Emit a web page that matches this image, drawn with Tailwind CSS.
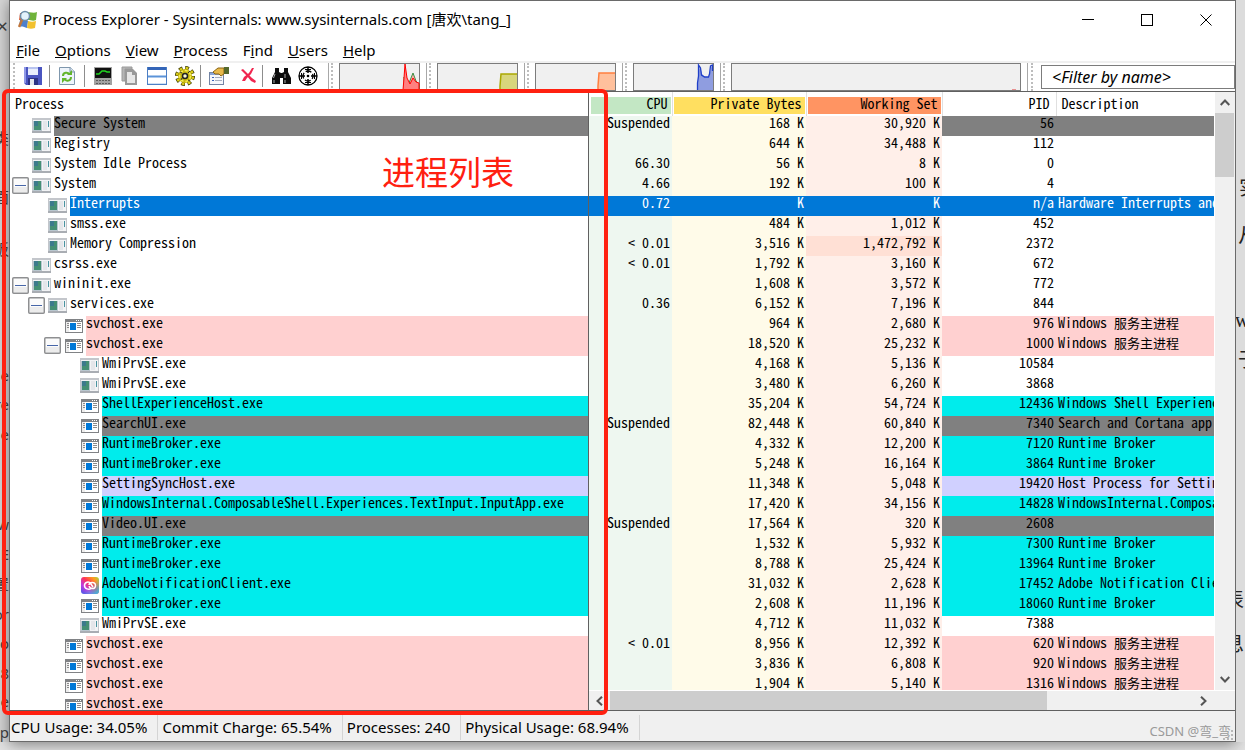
<!DOCTYPE html>
<html lang="en">
<head>
<meta charset="utf-8">
<title>Process Explorer - Sysinternals: www.sysinternals.com</title>
<script src="https://cdn.jsdelivr.net/npm/@tailwindcss/browser@4"></script>
</head>
<body class="relative flex h-screen flex-col overflow-hidden bg-[#e2e2e2] pb-2 font-['Noto_Sans','Noto_Sans_CJK_SC',sans-serif] text-black">

<svg class="absolute size-0" aria-hidden="true">
  <symbol id="console" viewBox="0 0 19 15">
    <rect width="19" height="15" fill="#c3c6cb"/><rect x="1" y="2" width="17" height="11" fill="#f2f3f5"/><rect y="13" width="19" height="2" fill="#a9adb3"/>
    <rect x="1" y="3" width="9" height="10" fill="#b9c6cf"/><rect x="2" y="3" width="7" height="9" fill="#458f74"/>
    <rect x="2" y="3" width="4" height="5" fill="#3c7a8c"/><rect x="11" y="3" width="4" height="9" fill="#e4e6ea"/>
    <rect x="16" y="3" width="1" height="6" fill="#4a93a0"/>
  </symbol>
  <symbol id="app" viewBox="0 0 18 14">
    <rect width="18" height="14" fill="#808285"/><rect x="1" y="3" width="16" height="10" fill="#fff"/>
    <rect x="1" y="3" width="3" height="10" fill="#ededed"/>
    <rect x="5" y="4" width="6" height="7" fill="#0078d7"/>
    <path d="M2 4.500h2M2 6.500h2M2 8.500h2M12 4.500h4M12 6.500h4M12 8.500h4" stroke="#8b8b8b"/>
    <path d="M11 1.500h1M13 1.500h1M15 1.500h1" stroke="#fff"/>
  </symbol>
  <symbol id="adobe" viewBox="0 0 18 18">
    <defs>
      <linearGradient id="ag" x1="0" y1="1" x2="1" y2="0"><stop offset="0" stop-color="#3a5be8"/><stop offset=".3" stop-color="#c03be0"/><stop offset=".55" stop-color="#ff3355"/><stop offset=".8" stop-color="#ff9a1f"/><stop offset="1" stop-color="#9bdc3c"/></linearGradient>
      <linearGradient id="ah" x1="0" y1="0" x2="1" y2="1"><stop offset=".5" stop-color="#28c8e8" stop-opacity="0"/><stop offset="1" stop-color="#28c8e8"/></linearGradient>
    </defs>
    <rect width="18" height="17" rx="3" fill="url(#ag)"/><rect width="18" height="17" rx="3" fill="url(#ah)"/>
    <path d="M10 11.500C8 13 3.500 12 3.500 8.500S8 4 9.500 6.500L12 10M8 8c0-3 6.500-4 6.500.500S9 12 8 9" fill="none" stroke="#fff" stroke-width="1.500"/>
  </symbol>
  <symbol id="minus" viewBox="0 0 17 17">
    <rect x=".75" y=".75" width="15.500" height="15.500" rx="1" fill="#fbfbfb" stroke="#8e8f91" stroke-width="1.500"/>
    <rect x="2" y="10" width="13" height="5" fill="#ececec"/><path d="M3 8.500h11" stroke="#4766a8"/>
  </symbol>
</svg>

<div class="flex min-h-0 flex-1">
  <!-- Document behind the window, left edge -->
  <div aria-hidden="true" class="flex w-[9px] flex-none flex-col items-end overflow-hidden bg-[#d6d6d6] pt-4 text-[15px] leading-[20px] text-[#444]">
    <span class="h-[112px]">✕</span>
    <span class="h-[60px]">类</span>
    <span class="h-[52px]">面</span>
    <span class="h-[126px]">板</span>
    <span class="h-[30px]">he</span>
    <span class="h-[30px]">re</span>
    <span class="h-[90px]">e</span>
    <span class="h-[30px]">w</span>
    <span class="h-[30px]">E</span>
    <span class="h-[30px]">置</span>
    <span class="h-[30px]">or</span>
    <span class="h-[30px]">o</span>
    <span class="h-[28px]">8</span>
    <span class="h-[31px]">e</span>
    <span>op</span>
  </div>

  <main class="flex min-w-0 flex-1 flex-col border border-[#6a6a6a] bg-white shadow-[0_2px_14px_rgba(0,0,0,0.45)]">
    <!-- Title bar -->
    <header class="flex h-[38px] flex-none items-center pl-2">
      <svg class="mr-[5px] size-5 flex-none" viewBox="0 0 20 20">
        <path d="M8 3c4-2 7 1 11-1l-1 8c-4 2-6-1-10 0z" fill="#6fb33a"/><path d="M2 10c4-1 5 0 8 1l-1 7c-3-1-5-2-8-1z" fill="#4d7fcb"/>
        <path d="M10 11c3 1 5 1 8 0l-1 7c-3 1-5 1-8 0z" fill="#f2c12e"/><path d="M2 3h6v7H1z" fill="#d9603b"/>
        <circle cx="7" cy="6" r="4.500" fill="#e4f2fb" stroke="#6d8da8" stroke-width="1.500"/><path d="M4 10L1 17" stroke="#c0763a" stroke-width="2.500"/>
      </svg>
      <h1 class="flex-1 whitespace-nowrap pb-[2px] text-[15px]">Process Explorer - Sysinternals: www.sysinternals.com [唐欢\tang_]</h1>
      <button aria-label="Minimize" class="flex h-full w-[59px] items-center justify-center"><svg class="size-3" viewBox="0 0 12 12"><path d="M0 5.500h12" stroke="#000"/></svg></button>
      <button aria-label="Maximize" class="flex h-full w-[59px] items-center justify-center"><svg class="size-3" viewBox="0 0 12 12"><rect x=".5" y=".5" width="11" height="11" fill="none" stroke="#000"/></svg></button>
      <button aria-label="Close" class="flex h-full w-[59px] items-center justify-center"><svg class="size-3" viewBox="0 0 12 12"><path d="M.5.500l11 11M11.500.500l-11 11" stroke="#000"/></svg></button>
    </header>

    <!-- Menu -->
    <nav class="flex h-[24px] flex-none items-center gap-[15px] border-b-2 border-[#f0f0f0] pl-[6px] text-[15px] leading-[20px]">
      <button><u>F</u>ile</button><button><u>O</u>ptions</button><button><u>V</u>iew</button><button><u>P</u>rocess</button><button>F<u>i</u>nd</button><button><u>U</u>sers</button><button><u>H</u>elp</button>
    </nav>

    <!-- Toolbar -->
    <div class="flex h-[28px] flex-none items-start">
      <div class="flex h-[26px] w-[318px] flex-none items-center">
        <i class="ml-[3px] mr-[8px] h-full border-l-2 border-dotted border-[#bdbdbd]"></i>
        <button aria-label="Save"><svg class="size-5" viewBox="0 0 20 20"><path d="M1 1h18v18H3l-2-2z" fill="#4a55c0"/><path d="M1 1h2v16H1z" fill="#8f98e6"/><rect x="5" y="1" width="10" height="8" fill="#e9eefc"/><rect x="5" y="1" width="10" height="2" fill="#b9c4f0"/><rect x="5" y="12" width="10" height="7" fill="#2d3384"/><rect x="7" y="13" width="4" height="6" fill="#e4e6ee"/></svg></button>
        <i class="ml-[6px] mr-[8px] h-[22px] w-px bg-[#8d8d8d]"></i>
        <button aria-label="Refresh"><svg class="h-5 w-[18px]" viewBox="0 0 18 20"><path d="M1.500 1.500h11l4 4v13h-15z" fill="#eef4fb" stroke="#7f97ad"/><path d="M12 1v5h5" fill="#d4dfec" stroke="#7f97ad"/><path d="M5 10c0-4 5-4 6-2M13 11c0 4-5 5-6 2" stroke="#63b52c" stroke-width="2" fill="none"/><path d="M9 9h5V4zM9 12H4v5z" fill="#63b52c"/></svg></button>
        <i class="ml-[8px] mr-[9px] h-[22px] w-px bg-[#8d8d8d]"></i>
        <button aria-label="System information"><svg class="h-5 w-[18px]" viewBox="0 0 18 20"><rect y="1" width="18" height="18" fill="#a2a2a2"/><rect x="1" y="2" width="16" height="10" fill="#111"/><path d="M2 8h3l3-3h3l2 1h3" stroke="#22d322" stroke-width="1.500" fill="none"/><path d="M2 14.500h14M2 17.500h14" stroke="#5c5c5c" stroke-dasharray="2 1"/></svg></button>
        <button aria-label="Copy" class="ml-[9px]"><svg class="h-5 w-4" viewBox="0 0 16 20"><path d="M1 1h10v2H4v12H1z" fill="#b5b5b5" stroke="#9a9a9a"/><path d="M4 3h8l4 4v12H4z" fill="#999"/><path d="M6 6h5v3h3v8H6z" fill="#e6e6e6"/></svg></button>
        <button aria-label="Split pane" class="ml-[10px]"><svg class="size-5" viewBox="0 0 20 20"><rect x=".5" y="1.500" width="19" height="17" fill="#fff" stroke="#4d7fc4"/><rect x="1" y="1" width="18" height="3" fill="#3465b8"/><path d="M1 10.500h18" stroke="#5b93d8" stroke-width="2"/><path d="M1 17.500h18" stroke="#cfe0f4"/></svg></button>
        <button aria-label="Services" class="ml-[8px]"><svg class="size-5" viewBox="0 0 20 20"><circle cx="10" cy="10" r="8" fill="none" stroke="#3a3800" stroke-width="4" stroke-dasharray="3.600 2.680"/><circle cx="10" cy="10" r="8" fill="none" stroke="#d9cc18" stroke-width="2.500" stroke-dasharray="2.600 3.680" stroke-dashoffset="-.5"/><circle cx="10" cy="10" r="7" fill="#c9b80c"/><circle cx="10" cy="10" r="5.500" fill="none" stroke="#f5ec55" stroke-width="1.500" stroke-dasharray="3 2"/><path d="M5 6l2 1M13 14l2 1M6 14l1-2M13 7l2-2" stroke="#333"/><circle cx="10" cy="10" r="2.500" fill="#f8f6d0" stroke="#222" stroke-width="1.500"/></svg></button>
        <i class="ml-[5px] mr-[8px] h-[22px] w-px bg-[#8d8d8d]"></i>
        <button aria-label="Properties"><svg class="size-5" viewBox="0 0 20 20"><rect x=".5" y="6.500" width="14" height="12" fill="#f5f7fb" stroke="#7384a4"/><rect x="1" y="7" width="13" height="2" fill="#8aa5d8"/><path d="M3 11.500h2M3 14.500h2" stroke="#3a62b8"/><path d="M6 11.500h7M6 14.500h7" stroke="#a5aec0"/><path d="M4 6l5-4h6v6l-3 2-2-2H6z" fill="#e7b84a" stroke="#8a6514"/><rect x="15" y="1" width="5" height="7" fill="#54682c"/></svg></button>
        <button aria-label="Kill process" class="ml-[11px]"><svg class="h-[18px] w-4" viewBox="0 0 16 18"><path d="M1 3l2-1 4 4 5 5 4 3-1 2-4-2-4-5-4-4z" fill="#f0264f"/><path d="M12 1h2l-3 6-4 4-2 3H2l2-4 5-4z" fill="#f0264f"/></svg></button>
        <i class="ml-[6px] mr-[8px] h-[22px] w-px bg-[#8d8d8d]"></i>
        <button aria-label="Find"><svg class="h-5 w-[21px]" viewBox="0 0 21 20"><path d="M4 2h4v4l2 1h1l2-1V2h4v4l3 6v6h-8v-6H9v6H1v-6l3-6z" fill="#0c0c0c"/><path d="M4 8l-1.500 4M14 8v4M3 14v3M14 14v3" stroke="#aaa"/></svg></button>
        <button aria-label="Find window's process" class="ml-[6px]"><svg class="size-5" viewBox="0 0 20 20"><g fill="none" stroke="#000"><circle cx="10" cy="10" r="9" stroke-width="1.300"/><circle cx="10" cy="10" r="5" stroke-width="1.300" stroke-dasharray="6 1.850" stroke-dashoffset="3"/><path d="M10 1v6M10 13v6M1 10h6M13 10h6" stroke-width="1.500"/><path d="M7 3.500h6M7 16.500h6M3.500 7v6M16.500 7v6"/></g><circle cx="10" cy="10" r="1.300"/></svg></button>
      </div>
      <div class="flex h-full w-[98px] flex-none"><i class="h-full w-px bg-[#a8a8a8]"></i><i class="ml-[2px] mr-[6px] h-full border-l-2 border-dotted border-[#bdbdbd]"></i>
        <svg class="h-full w-[82px]" viewBox="0 0 82 28"><rect x=".5" y=".5" width="80" height="27" fill="#f0f0f0" stroke="#7c7c7c"/><path d="M65 27V14l2 5 3 1 4-10 3 8 3 3v6z" fill="#ffaaaa" stroke="#3b8f43"/><path d="M64 27l1-12 1-14 2 14 3 6 3-6 3 4 3 1v7z" fill="#ff8080" stroke="#f00"/></svg></div>
      <div class="flex h-full w-[98px] flex-none"><i class="h-full w-px bg-[#a8a8a8]"></i><i class="ml-[2px] mr-[6px] h-full border-l-2 border-dotted border-[#bdbdbd]"></i>
        <svg class="h-full w-[82px]" viewBox="0 0 82 28"><rect x=".5" y=".5" width="80" height="27" fill="#f0f0f0" stroke="#7c7c7c"/><path d="M63 27l1-16h16v16z" fill="#d8d67c"/><path d="M63 27v-4l1-12h16" fill="none" stroke="#aaa800" stroke-width="1.500"/></svg></div>
      <div class="flex h-full w-[98px] flex-none"><i class="h-full w-px bg-[#a8a8a8]"></i><i class="ml-[2px] mr-[6px] h-full border-l-2 border-dotted border-[#bdbdbd]"></i>
        <svg class="h-full w-[82px]" viewBox="0 0 82 28"><rect x=".5" y=".5" width="80" height="27" fill="#f0f0f0" stroke="#7c7c7c"/><path d="M63 27l1-17h16v17z" fill="#ffc09c"/><path d="M63 27v-4l1-13h16" fill="none" stroke="#ff7f3f" stroke-width="1.500"/></svg></div>
      <div class="flex h-full w-[98px] flex-none"><i class="h-full w-px bg-[#a8a8a8]"></i><i class="ml-[2px] mr-[6px] h-full border-l-2 border-dotted border-[#bdbdbd]"></i>
        <svg class="h-full w-[82px]" viewBox="0 0 82 28"><rect x=".5" y=".5" width="80" height="27" fill="#f0f0f0" stroke="#7c7c7c"/><path d="M65 27V10l2-7 2 8 3 3h4l2-9 1-3 1 6v19z" fill="#8f9de0"/><path d="M64.500 27v-7l1-7V2l2 3 1 7 3 2h4l1-3 1-8 2-1v6" fill="none" stroke="#1f3fc8" stroke-width="1.300"/></svg></div>
      <div class="flex h-full min-w-0 flex-1"><i class="h-full w-px bg-[#a8a8a8]"></i><i class="ml-[2px] mr-[6px] h-full border-l-2 border-dotted border-[#bdbdbd]"></i>
        <div class="flex h-full flex-1 items-end justify-end border border-[#7c7c7c] bg-[#f0f0f0] pr-1"><i class="h-px w-1 bg-[#e89090]"></i></div></div>
      <div class="flex h-full w-[214px] flex-none"><i class="ml-[6px] h-full w-px bg-[#a8a8a8]"></i><i class="ml-[3px] mr-[8px] h-full border-l-2 border-dotted border-[#bdbdbd]"></i>
        <input aria-label="Filter by name" placeholder="&lt;Filter by name&gt;" class="mt-[2px] h-[24px] min-w-0 flex-1 border border-[#7c7c7c] bg-white pl-[10px] text-[16px] italic placeholder:text-black"></div>
    </div>

    <!-- Process list -->
    <section class="flex min-h-0 flex-1 border-y border-[#606060] font-['Noto_Sans_Mono_CJK_SC','Liberation_Mono','Noto_Sans_CJK_SC',monospace] text-[14px] leading-[12px]">
      <div class="w-[578px] flex-none overflow-hidden">
        <table class="w-full table-fixed border-collapse">
          <thead><tr class="h-[24px] align-top"><th class="p-0 pl-[5px] pt-[5px] text-left font-normal">Process</th></tr></thead>
          <tbody id="tree"></tbody>
        </table>
      </div>
      <div class="flex min-w-0 flex-1 flex-col border-l border-[#606060]">
        <div class="flex min-h-0 flex-1">
          <div class="min-w-0 flex-1 overflow-hidden">
            <table class="w-full table-fixed border-collapse">
              <colgroup><col class="w-[83px]"><col class="w-[134px]"><col class="w-[136px]"><col class="w-[114px]"><col></colgroup>
              <thead><tr class="h-[24px] whitespace-nowrap align-top">
                <th class="border-r border-[#e0e0e0] p-0 pl-[2px] pr-px pt-[5px] text-right font-normal"><div class="bg-[#c3e7c4] pb-[5px] pr-[3px]">CPU</div></th>
                <th class="border-r border-[#e0e0e0] p-0 pl-px pr-px pt-[5px] text-right font-normal"><div class="bg-[#ffdf60] pb-[5px] pr-[3px]">Private Bytes</div></th>
                <th class="border-r border-[#e0e0e0] p-0 pl-px pr-px pt-[5px] text-right font-normal"><div class="bg-[#ff9462] pb-[5px] pr-[3px]">Working Set</div></th>
                <th class="border-r border-[#e0e0e0] p-0 pr-[6px] pt-[5px] text-right font-normal">PID</th>
                <th class="p-0 pl-[5px] pt-[5px] text-left font-normal">Description</th>
              </tr></thead>
              <tbody id="values"></tbody>
            </table>
          </div>
          <div class="ml-px flex w-[20px] flex-none flex-col bg-[#f0f0f0]">
            <button aria-label="Scroll up" class="flex h-[21px] w-[19px] items-center justify-center"><svg class="h-[7px] w-[10px]" viewBox="0 0 10 7"><path d="M.7 6L5 1.500 9.300 6" fill="none" stroke="#555" stroke-width="2"/></svg></button>
            <div class="h-[64px] w-[19px] bg-[#cdcdcd]"></div>
            <button aria-label="Scroll down" class="mt-auto flex h-[21px] w-[19px] items-center justify-center"><svg class="h-[7px] w-[10px]" viewBox="0 0 10 7"><path d="M.7 1L5 5.500 9.300 1" fill="none" stroke="#555" stroke-width="2"/></svg></button>
          </div>
        </div>
        <div class="mt-px flex h-[19px] flex-none bg-[#f0f0f0]">
          <button aria-label="Scroll left" class="flex w-[21px] items-center justify-center"><svg class="h-[10px] w-[7px]" viewBox="0 0 7 10"><path d="M6 .7L1.500 5 6 9.300" fill="none" stroke="#555" stroke-width="2"/></svg></button>
          <div class="flex-1"><div class="h-full w-3/4 bg-[#cdcdcd]"></div></div>
          <button aria-label="Scroll right" class="mr-[21px] flex w-[21px] items-center justify-center"><svg class="h-[10px] w-[7px]" viewBox="0 0 7 10"><path d="M1 .7L5.500 5 1 9.300" fill="none" stroke="#555" stroke-width="2"/></svg></button>
        </div>
      </div>
    </section>

    <!-- Status bar -->
    <footer class="flex h-[30px] flex-none items-center whitespace-nowrap bg-[#f0f0f0] pl-px pt-[3px] text-[15px] leading-[25px]">
      <span class="border-r border-[#d4d4d4] pr-[10px]">CPU Usage: 34.05%</span>
      <span class="border-r border-[#d4d4d4] pl-1 pr-[10px]">Commit Charge: 65.54%</span>
      <span class="border-r border-[#d4d4d4] pl-1 pr-[10px]">Processes: 240</span>
      <span class="border-r border-[#d4d4d4] pl-1 pr-[10px]">Physical Usage: 68.94%</span>
      <span class="relative ml-auto pr-1 pt-2 text-[13px] text-[#9a9a9a]">CSDN @弯_弯<svg class="absolute bottom-1 right-px size-3" viewBox="0 0 12 12"><path d="M1 11h2m2 0h2m2 0h2M5 7h2m2 0h2M9 3h2" stroke="#b8b8b8" stroke-width="2"/></svg></span>
    </footer>
  </main>

  <!-- Document behind the window, right edge -->
  <div aria-hidden="true" class="flex w-[9px] flex-none flex-col overflow-hidden bg-[#dcdcdc] pt-[174px] font-['Liberation_Serif','Noto_Sans_CJK_SC',serif] text-[20px] leading-[28px] text-[#222]">
    <span class="ml-[3px] h-[48px]">实</span>
    <span class="ml-[2px] h-[84px]">从</span>
    <span class="-ml-px h-[40px]">w</span>
    <span class="ml-[2px] h-[240px]">于</span>
    <span class="-ml-3 h-[44px]">表</span>
    <span class="-ml-3">息</span>
  </div>
</div>

<!-- Annotation over the process column -->
<div class="pointer-events-none absolute left-[2px] top-[89px] h-[626px] w-[606px] rounded-[6px] border-4 border-[#ff2010]"></div>
<p class="pointer-events-none absolute left-[382px] top-[152px] font-['Noto_Sans_CJK_SC',sans-serif] text-[33px] leading-[38px] text-[#ff2010]">进程列表</p>

<script>
const S = '<span class="text-[13px]">服务主进程</span>';
// depth, icon, expandable, name, colour, cpu, private bytes, working set, pid, description
const rows = [
 [0,'console',0,'Secure System','gray','Suspended','168','30,920','56',''],
 [0,'console',0,'Registry','','','644','34,488','112',''],
 [0,'console',0,'System Idle Process','','66.30','56','8','0',''],
 [0,'console',1,'System','','4.66','192','100','4',''],
 [1,'console',0,'Interrupts','sel','0.72','','','n/a','Hardware Interrupts and DPCs'],
 [1,'console',0,'smss.exe','','','484','1,012','452',''],
 [1,'console',0,'Memory Compression','','< 0.01','3,516','1,472,792','2372',''],
 [0,'console',0,'csrss.exe','','< 0.01','1,792','3,160','672',''],
 [0,'console',1,'wininit.exe','','','1,608','3,572','772',''],
 [1,'console',1,'services.exe','','0.36','6,152','7,196','844',''],
 [2,'app',0,'svchost.exe','pink','','964','2,680','976','Windows '+S],
 [2,'app',1,'svchost.exe','pink','','18,520','25,232','1000','Windows '+S],
 [3,'console',0,'WmiPrvSE.exe','','','4,168','5,136','10584',''],
 [3,'console',0,'WmiPrvSE.exe','','','3,480','6,260','3868',''],
 [3,'app',0,'ShellExperienceHost.exe','cyan','','35,204','54,724','12436','Windows Shell Experience Host'],
 [3,'app',0,'SearchUI.exe','gray','Suspended','82,448','60,840','7340','Search and Cortana application'],
 [3,'app',0,'RuntimeBroker.exe','cyan','','4,332','12,200','7120','Runtime Broker'],
 [3,'app',0,'RuntimeBroker.exe','cyan','','5,248','16,164','3864','Runtime Broker'],
 [3,'app',0,'SettingSyncHost.exe','violet','','11,348','5,048','19420','Host Process for Setting Synchronization'],
 [3,'app',0,'WindowsInternal.ComposableShell.Experiences.TextInput.InputApp.exe','cyan','','17,420','34,156','14828','WindowsInternal.ComposableShell'],
 [3,'app',0,'Video.UI.exe','gray','Suspended','17,564','320','2608',''],
 [3,'app',0,'RuntimeBroker.exe','cyan','','1,532','5,932','7300','Runtime Broker'],
 [3,'app',0,'RuntimeBroker.exe','cyan','','8,788','25,424','13964','Runtime Broker'],
 [3,'adobe',0,'AdobeNotificationClient.exe','cyan','','31,032','2,628','17452','Adobe Notification Client'],
 [3,'app',0,'RuntimeBroker.exe','cyan','','2,608','11,196','18060','Runtime Broker'],
 [3,'console',0,'WmiPrvSE.exe','','','4,712','11,032','7388',''],
 [2,'app',0,'svchost.exe','pink','< 0.01','8,956','12,392','620','Windows '+S],
 [2,'app',0,'svchost.exe','pink','','3,836','6,808','920','Windows '+S],
 [2,'app',0,'svchost.exe','pink','','1,904','5,140','1316','Windows '+S],
 [2,'app',0,'svchost.exe','pink','','','','','']
];
const bg = {'':'', gray:'bg-[#808080]', sel:'bg-[#0078d7] text-white', pink:'bg-[#ffd0d0]', cyan:'bg-[#00ecec]', violet:'bg-[#d0d0ff]'};
const indent = ['pl-[2px]','pl-[18px]','pl-[34px]','pl-[50px]'];
const icons = {console:'mt-[2px] h-[15px] w-[19px]', app:'ml-px mt-[3px] h-[14px] w-[18px]', adobe:'ml-px mt-px size-[18px]'};
const esc = s => s.replace('<','&lt;');
let tree = '', values = '';
rows.forEach(([depth,icon,open,name,colour,cpu,pb,ws,pid,desc]) => {
  const box = open ? '<button aria-label="Collapse" class="block size-[17px]"><svg class="size-[17px]"><use href="#minus"/></svg></button>' : '';
  tree += `<tr class="h-[20px]"><td class="p-0"><div class="flex h-[20px] ${indent[depth]}"><span class="w-[20px] flex-none pt-px">${box}</span><span class="w-[22px] flex-none"><svg class="${icons[icon]}"><use href="#${icon}"/></svg></span><span class="flex-1 whitespace-nowrap ${bg[colour]}">${name}</span></div></td></tr>`;
  const sel = colour === 'sel';
  const c1 = sel ? bg.sel : 'bg-[#eef7f0]', c2 = sel ? bg.sel : 'bg-[#fffbe9]', c3 = sel ? bg.sel : ws.length > 8 ? 'bg-[#ffe0d5]' : 'bg-[#ffefe9]';
  const k = v => v || sel ? v + ' K' : '';
  values += `<tr class="h-[20px] whitespace-nowrap align-top"><td class="p-0 pr-[2px] text-right ${c1}">${esc(cpu)}</td><td class="p-0 pr-[2px] text-right ${c2}">${k(pb)}</td><td class="p-0 pr-[2px] text-right ${c3}">${k(ws)}</td><td class="p-0 pr-[2px] text-right ${bg[colour]}">${pid}</td><td class="overflow-hidden p-0 pl-[2px] ${bg[colour]}">${desc}</td></tr>`;
});
document.getElementById('tree').innerHTML = tree;
document.getElementById('values').innerHTML = values;
</script>
</body>
</html>
